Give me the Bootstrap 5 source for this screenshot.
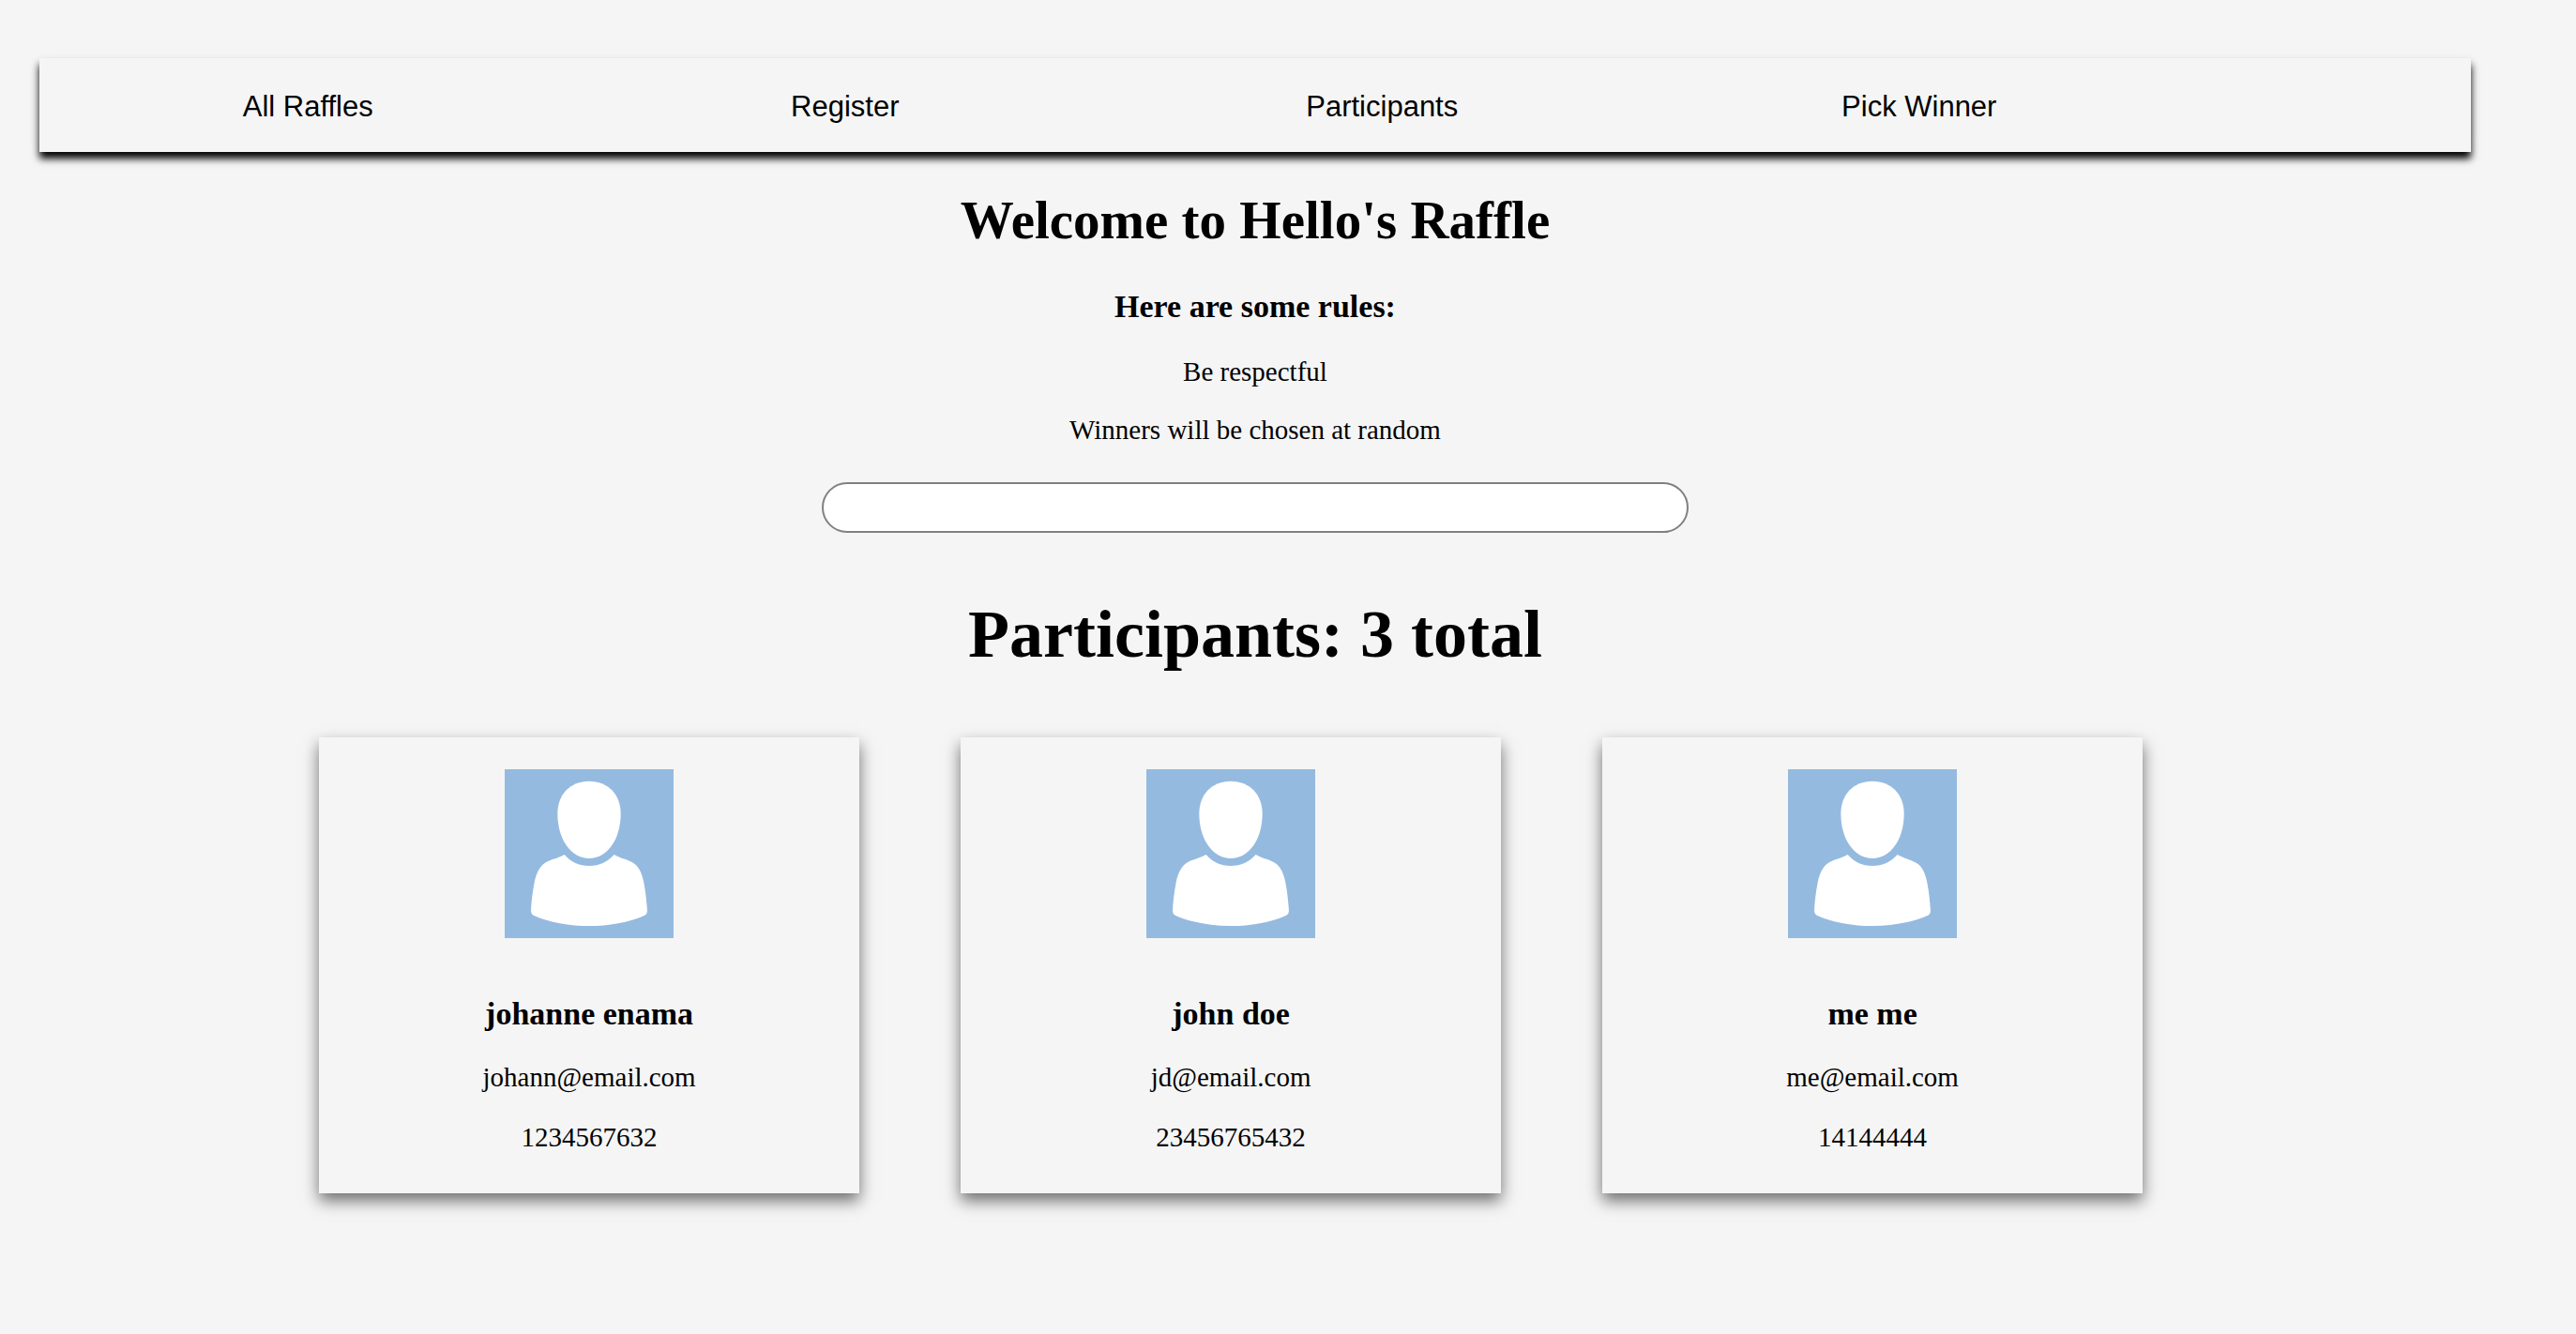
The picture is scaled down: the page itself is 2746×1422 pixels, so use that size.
<!DOCTYPE html>
<html lang="en">
<head>
<meta charset="utf-8">
<meta name="viewport" content="width=device-width, initial-scale=1">
<title>Hello's Raffle</title>
<link rel="stylesheet" href="https://cdn.jsdelivr.net/npm/bootstrap@5.3.0/dist/css/bootstrap.min.css">
<style>
body { background: #f5f5f5; color: #000; font-family: "Liberation Serif", serif; font-size: 29px; line-height: 34px; }
.page-wrap { padding: 62px 112px 62px 42px; }
.raffle-nav { padding: 34px 302px 30px 0; background: #f5f5f5; box-shadow: 0 7px 8px #000, 0 2px 16px rgba(0,0,0,.03); }
.raffle-nav a { font-family: "Liberation Sans", sans-serif; font-size: 31px; line-height: 36px; color: #000; }
h1, h2, h3 { font-weight: 700; }
.raffle-title { font-size: 57px; line-height: 66px; margin: 40px 0; }
.sub-title { font-size: 34px; line-height: 38px; margin: 0 0 33px; }
.rules p { margin: 0 0 28px; }
.search-box { width: 35.65%; height: 54px; margin: 39px auto 67px; border: 2px solid gray; border-radius: 27px; background: #fff; }
.total-title { font-size: 72px; line-height: 82px; margin: 0 0 69px; }
.people { padding: 0 13.5% 0 11.5%; gap: 108px; }
.person { flex: 1 1 0; padding: 34px 16px 43px; background: #f5f5f5; box-shadow: 0 8px 16px rgba(0,0,0,.55); }
.person svg { width: 180px; height: 180px; margin: 0 auto 62px; }
.person .sub-title { margin-bottom: 31px; }
.person p { margin: 0 0 30px; }
.person p:last-child { margin: 0; }
</style>
</head>
<body>
<div class="page-wrap">
  <nav class="raffle-nav d-flex" aria-label="Main">
    <ul class="nav nav-justified w-100 flex-nowrap">
      <li class="nav-item"><a class="text-decoration-none" href="#">All Raffles</a></li>
      <li class="nav-item"><a class="text-decoration-none" href="#">Register</a></li>
      <li class="nav-item"><a class="text-decoration-none" href="#">Participants</a></li>
      <li class="nav-item"><a class="text-decoration-none" href="#">Pick Winner</a></li>
    </ul>
  </nav>
  <main class="text-center">
    <h1 class="raffle-title">Welcome to Hello's Raffle</h1>
    <section class="rules">
      <h3 class="sub-title">Here are some rules:</h3>
      <p>Be respectful</p>
      <p class="mb-0">Winners will be chosen at random</p>
    </section>
    <input type="text" class="search-box d-block px-4" aria-label="Search participants">
    <h2 class="total-title">Participants: 3 total</h2>
    <svg class="d-none" aria-hidden="true">
      <symbol id="avatar" viewBox="54 30 540 540">
        <rect x="54" y="30" width="540" height="540" fill="#95badf"/>
        <path fill="#fff" d="M324 68C384 68 425 110 425 172C425 256 381 315 324 315C267 315 223 256 223 172C223 110 264 68 324 68Z"/>
        <path fill="#fff" d="M245 303C266 327 291 339 324 339C357 339 382 327 404 303C427 317 450 318 470 333C486 346 494 367 499 392C505 424 508 453 510 483Q510 492 502 497C452 520 385 531 324 531C263 531 196 520 146 497Q138 492 138 483C139 453 143 424 149 392C154 367 163 346 178 333C198 318 221 317 245 303Z"/>
      </symbol>
    </svg>
    <section class="people d-flex">
      <article class="person">
        <svg class="d-block" role="img" aria-label="Avatar"><use href="#avatar"/></svg>
        <h3 class="sub-title">johanne enama</h3>
        <p>johann@email.com</p>
        <p>1234567632</p>
      </article>
      <article class="person">
        <svg class="d-block" role="img" aria-label="Avatar"><use href="#avatar"/></svg>
        <h3 class="sub-title">john doe</h3>
        <p>jd@email.com</p>
        <p>23456765432</p>
      </article>
      <article class="person">
        <svg class="d-block" role="img" aria-label="Avatar"><use href="#avatar"/></svg>
        <h3 class="sub-title">me me</h3>
        <p>me@email.com</p>
        <p>14144444</p>
      </article>
    </section>
  </main>
</div>
<script src="https://cdn.jsdelivr.net/npm/bootstrap@5.3.0/dist/js/bootstrap.bundle.min.js"></script>
</body>
</html>
